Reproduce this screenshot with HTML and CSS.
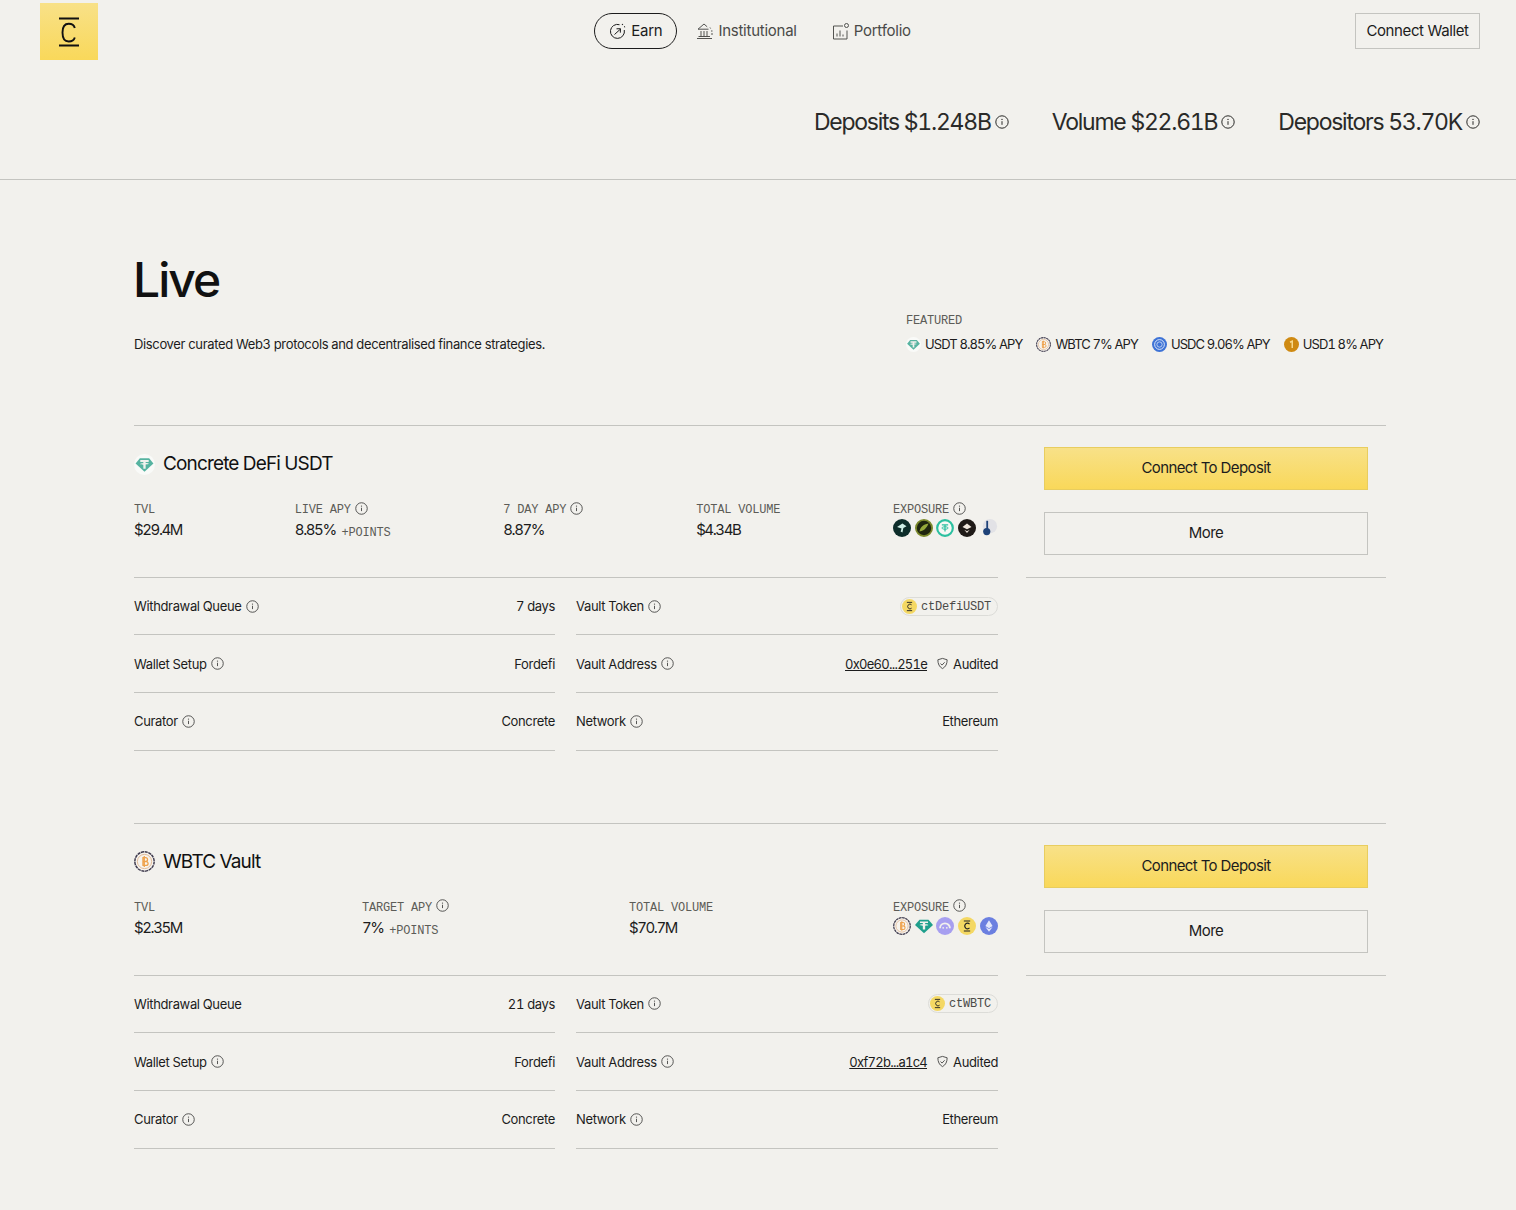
FILE: index.html
```html
<!DOCTYPE html>
<html lang="en">
<head>
    <meta charset="UTF-8">
    <meta name="viewport" content="width=device-width, initial-scale=1.0">
    <title>Concrete Earn</title>
    <link rel="stylesheet" href="styles.css">
</head>
<body>
    <svg class="sprites" aria-hidden="true">
        <symbol id="info" viewBox="0 0 14 14">
            <circle cx="7" cy="7" r="6.200" fill="none" stroke="currentColor"/>
            <path d="M7 6.200v3.600" stroke="currentColor" fill="none"/>
            <circle cx="7" cy="4.400" r=".7" fill="currentColor"/>
        </symbol>
        <symbol id="tether" viewBox="0 0 20 20">
            <circle cx="10" cy="10" r="10" fill="#f9faf8"/>
            <path d="M5.600 4h8.800L18.500 9 10 17 1.500 9z" fill="#56b3a0"/>
            <path d="M6 5.800h8v1.700h-2.900v1.100c1.700.1 3 .4 3 .7s-1.300.6-3 .7V14H8.900v-3.800c-1.700-.1-3-.4-3-.7s1.300-.6 3-.7V7.500H6z" fill="#f2f1ed"/>
        </symbol>
        <symbol id="tether-solid" viewBox="0 0 20 20">
            <path d="M5 3h10l5 6-10 9L0 9z" fill="#1f9f8c"/>
            <path d="M5.500 5h9v1.800h-3.200V8c2 .1 3.500.4 3.500.8s-1.500.7-3.500.8V14H8.700V9.600c-2-.1-3.500-.4-3.500-.8s1.500-.7 3.500-.8V6.800H5.500z" fill="#f2f1ed"/>
        </symbol>
        <symbol id="wbtc" viewBox="0 0 20 20">
            <circle cx="10" cy="10" r="9.200" fill="#f7f4ee" stroke="#3f3b4e" stroke-width="1.400" stroke-dasharray="3 .6"/>
            <circle cx="10" cy="10" r="6.800" fill="none" stroke="#dcb08a" stroke-width=".8"/>
            <path d="M8.500 6.200v7.600M8 6.200h3a1.900 1.900 0 0 1 0 3.800H8.500M8.500 10H11.500a1.900 1.900 0 0 1 0 3.800H8M9.800 4.800v10.400" fill="none" stroke="#eea24c" stroke-width="1.200"/>
        </symbol>
        <symbol id="usdc" viewBox="0 0 20 20">
            <circle cx="10" cy="10" r="10" fill="#3e73d6"/>
            <circle cx="10" cy="10" r="6.500" fill="none" stroke="#dfe8f8" stroke-width="1.300"/>
            <circle cx="10" cy="10" r="3.500" fill="none" stroke="#dfe8f8"/>
        </symbol>
        <symbol id="usd1" viewBox="0 0 20 20">
            <circle cx="10" cy="10" r="10" fill="#cf8a12"/>
            <path d="M8 7l3-1.500v9" fill="none" stroke="#f7d98c" stroke-width="2"/>
        </symbol>
        <symbol id="ctoken" viewBox="0 0 20 20">
            <circle cx="10" cy="10" r="10" fill="#f4d863"/>
            <path d="M6.500 4.500h7M6.500 15.500h7" stroke="#222" stroke-width="1.200"/>
            <path d="M12.800 7.800a3 3.200 0 1 0 0 4.400" fill="none" stroke="#222" stroke-width="1.200"/>
        </symbol>
        <symbol id="eth" viewBox="0 0 20 20">
            <circle cx="10" cy="10" r="10" fill="#6b7fe0"/>
            <path d="M10 3.500l4 6.500-4 2.400L6 10zM6 11l4 5.500 4-5.500-4 2.400z" fill="#e4e8fb"/>
        </symbol>
        <symbol id="arc" viewBox="0 0 20 20">
            <circle cx="10" cy="10" r="10" fill="#a79ff0"/>
            <path d="M4.500 12.500a5.500 5.500 0 0 1 11 0" fill="none" stroke="#f2f1ed" stroke-width="2"/>
            <circle cx="8" cy="12" r="1" fill="#f2f1ed"/>
            <circle cx="12" cy="12" r="1" fill="#f2f1ed"/>
        </symbol>
        <symbol id="exp-dark" viewBox="0 0 20 20">
            <circle cx="10" cy="10" r="10" fill="#0d2d2a"/>
            <path d="M4.500 9l6-4 4.500 3-3.500 2-1 5-2-1 1-3.500z" fill="#cfeee6"/>
        </symbol>
        <symbol id="exp-olive" viewBox="0 0 20 20">
            <circle cx="10" cy="10" r="9" fill="#20260f" stroke="#7c8a2c" stroke-width="2"/>
            <path d="M5 14c1-5 4-8 10-9-1 2-1 3-3 5-1 2-4 3-7 4z" fill="#95a93a"/>
        </symbol>
        <symbol id="exp-ring" viewBox="0 0 20 20">
            <circle cx="10" cy="10" r="8.700" fill="#f7f8f5" stroke="#2cc0a0" stroke-width="2.400"/>
            <path d="M6.500 6.500h7M10 6.500V14" fill="none" stroke="#2cc0a0" stroke-width="1.400"/>
            <ellipse cx="10" cy="10" rx="3.500" ry="1.400" fill="none" stroke="#2cc0a0"/>
        </symbol>
        <symbol id="exp-black" viewBox="0 0 20 20">
            <circle cx="10" cy="10" r="10" fill="#1f1a17"/>
            <path d="M5 9l5-4 5 4-5 2.500zM7 12l3 1.500 3-1.500-3 3.500z" fill="#efe6dc"/>
        </symbol>
        <symbol id="exp-thermo" viewBox="0 0 20 20">
            <circle cx="11" cy="8" r="8" fill="#e2e2e6"/>
            <path d="M7 2h2v9H7z" fill="#1e4278"/>
            <circle cx="7.500" cy="14" r="4" fill="#1e4278"/>
        </symbol>
    </svg>

    <header class="topbar">
        <a class="logo" href="#">
            <svg viewBox="0 0 20 30" width="20" height="30" fill="none" stroke="#111" stroke-width="1.900">
                <path d="M0 1.500h20M0 28.500h20"/>
                <path d="M15.800 11C15 8 13 6.800 9.700 6.800 5.500 6.800 3.500 10 3.500 15.500S5.500 24.500 9.700 24.500c3.300 0 5.300-1.300 6.100-4"/>
            </svg>
        </a>
        <nav class="nav">
            <a class="nav-item active" href="#">
                <svg viewBox="0 0 18 18" width="18" height="18" fill="none" stroke="currentColor">
                    <path d="M10.500 2.700A7 7 0 1 0 15.300 8"/>
                    <path d="M5.500 12.500l5.500-5M7.500 6.800l4-.1-.2 4"/>
                    <path d="M13.200 2.800l.5-.8M15.200 5l.8-.4" stroke-width="1.300"/>
                </svg>
                Earn
            </a>
            <a class="nav-item" href="#">
                <svg viewBox="0 0 18 18" width="18" height="18" fill="none" stroke="currentColor" stroke-width=".95">
                    <path d="M2 7.200L8 2l3.200 2.800M2 7.200h10.500M1 16.500h15M2.500 14.500h11.500"/>
                    <path d="M5 9v5.500M8 9v5.500M11 9v5.500"/>
                    <path d="M14 5.500l.6 1M16.500 9H15M15 12h2"/>
                </svg>
                Institutional
            </a>
            <a class="nav-item portfolio" href="#">
                <svg viewBox="0 0 18 18" width="18" height="18" fill="none" stroke="currentColor" stroke-width=".95">
                    <path d="M11 4H1.500v13H15V8.500"/>
                    <circle cx="14.500" cy="3.500" r="2"/>
                    <path d="M5 14.500v-3M8 14.500V8.500M11 14.500v-2"/>
                </svg>
                Portfolio
            </a>
        </nav>
        <div class="topbar-right">
            <button class="wallet-btn">Connect Wallet</button>
        </div>
    </header>

    <section class="stats">
        <div class="stat">Deposits $1.248B<svg class="info-lg"><use href="#info"/></svg></div>
        <div class="stat">Volume $22.61B<svg class="info-lg"><use href="#info"/></svg></div>
        <div class="stat">Depositors 53.70K<svg class="info-lg"><use href="#info"/></svg></div>
    </section>

    <main class="content">
        <div class="intro">
            <div>
                <h1>Live</h1>
                <p class="lead">Discover curated Web3 protocols and decentralised finance strategies.</p>
            </div>
            <div class="featured">
                <div class="mono-label">FEATURED</div>
                <div class="featured-list">
                    <span class="feat"><svg class="ico-feat"><use href="#tether"/></svg>USDT 8.85% APY</span>
                    <span class="feat"><svg class="ico-feat"><use href="#wbtc"/></svg>WBTC 7% APY</span>
                    <span class="feat"><svg class="ico-feat"><use href="#usdc"/></svg>USDC 9.06% APY</span>
                    <span class="feat"><svg class="ico-feat"><use href="#usd1"/></svg>USD1 8% APY</span>
                </div>
            </div>
        </div>

        <article class="vault">
            <div class="vault-top">
                <div class="summary">
                    <h2><svg class="ico-title"><use href="#tether"/></svg>Concrete DeFi USDT</h2>
                    <div class="metrics">
                        <div class="metric">
                            <div class="mono-label">TVL</div>
                            <div class="metric-val">$29.4M</div>
                        </div>
                        <div class="metric">
                            <div class="mono-label">LIVE APY<svg class="info"><use href="#info"/></svg></div>
                            <div class="metric-val">8.85% <span class="points">+POINTS</span></div>
                        </div>
                        <div class="metric">
                            <div class="mono-label">7 DAY APY<svg class="info"><use href="#info"/></svg></div>
                            <div class="metric-val">8.87%</div>
                        </div>
                        <div class="metric">
                            <div class="mono-label">TOTAL VOLUME</div>
                            <div class="metric-val">$4.34B</div>
                        </div>
                        <div class="metric">
                            <div class="mono-label">EXPOSURE<svg class="info"><use href="#info"/></svg></div>
                            <div class="exposure">
                                <svg><use href="#exp-dark"/></svg>
                                <svg><use href="#exp-olive"/></svg>
                                <svg><use href="#exp-ring"/></svg>
                                <svg><use href="#exp-black"/></svg>
                                <svg><use href="#exp-thermo"/></svg>
                            </div>
                        </div>
                    </div>
                </div>
                <div class="actions">
                    <button class="btn-primary">Connect To Deposit</button>
                    <button class="btn-more">More</button>
                </div>
            </div>
            <div class="details">
                <div class="row"><span class="row-key">Withdrawal Queue<svg class="info"><use href="#info"/></svg></span><span>7 days</span></div>
                <div class="row"><span class="row-key">Vault Token<svg class="info"><use href="#info"/></svg></span><span class="token"><svg><use href="#ctoken"/></svg>ctDefiUSDT</span></div>
                <div class="row"><span class="row-key">Wallet Setup<svg class="info"><use href="#info"/></svg></span><span>Fordefi</span></div>
                <div class="row"><span class="row-key">Vault Address<svg class="info"><use href="#info"/></svg></span><span class="address"><a href="#">0x0e60...251e</a><span class="audited"><svg viewBox="0 0 14 14" width="13" height="13" fill="none" stroke="currentColor"><path d="M7 1.500l5 1.500c0 4.500-1.500 7.500-5 9.500-3.500-2-5-5-5-9.500z"/><path d="M4.800 7l1.700 1.700 2.800-3"/></svg>Audited</span></span></div>
                <div class="row"><span class="row-key">Curator<svg class="info"><use href="#info"/></svg></span><span>Concrete</span></div>
                <div class="row"><span class="row-key">Network<svg class="info"><use href="#info"/></svg></span><span>Ethereum</span></div>
            </div>
        </article>

        <article class="vault">
            <div class="vault-top">
                <div class="summary">
                    <h2><svg class="ico-title"><use href="#wbtc"/></svg>WBTC Vault</h2>
                    <div class="metrics">
                        <div class="metric">
                            <div class="mono-label">TVL</div>
                            <div class="metric-val">$2.35M</div>
                        </div>
                        <div class="metric">
                            <div class="mono-label">TARGET APY<svg class="info"><use href="#info"/></svg></div>
                            <div class="metric-val">7% <span class="points">+POINTS</span></div>
                        </div>
                        <div class="metric">
                            <div class="mono-label">TOTAL VOLUME</div>
                            <div class="metric-val">$70.7M</div>
                        </div>
                        <div class="metric">
                            <div class="mono-label">EXPOSURE<svg class="info"><use href="#info"/></svg></div>
                            <div class="exposure">
                                <svg><use href="#wbtc"/></svg>
                                <svg><use href="#tether-solid"/></svg>
                                <svg><use href="#arc"/></svg>
                                <svg><use href="#ctoken"/></svg>
                                <svg><use href="#eth"/></svg>
                            </div>
                        </div>
                    </div>
                </div>
                <div class="actions">
                    <button class="btn-primary">Connect To Deposit</button>
                    <button class="btn-more">More</button>
                </div>
            </div>
            <div class="details">
                <div class="row"><span class="row-key">Withdrawal Queue</span><span>21 days</span></div>
                <div class="row"><span class="row-key">Vault Token<svg class="info"><use href="#info"/></svg></span><span class="token"><svg><use href="#ctoken"/></svg>ctWBTC</span></div>
                <div class="row"><span class="row-key">Wallet Setup<svg class="info"><use href="#info"/></svg></span><span>Fordefi</span></div>
                <div class="row"><span class="row-key">Vault Address<svg class="info"><use href="#info"/></svg></span><span class="address"><a href="#">0xf72b...a1c4</a><span class="audited"><svg viewBox="0 0 14 14" width="13" height="13" fill="none" stroke="currentColor"><path d="M7 1.500l5 1.500c0 4.500-1.500 7.500-5 9.500-3.500-2-5-5-5-9.500z"/><path d="M4.800 7l1.700 1.700 2.800-3"/></svg>Audited</span></span></div>
                <div class="row"><span class="row-key">Curator<svg class="info"><use href="#info"/></svg></span><span>Concrete</span></div>
                <div class="row"><span class="row-key">Network<svg class="info"><use href="#info"/></svg></span><span>Ethereum</span></div>
            </div>
        </article>
    </main>
</body>
</html>
```

FILE: styles.css
```css
*{
    box-sizing: border-box;
}
body{
    margin: 0;
    background: #f2f1ed;
    color: #1c1c1c;
    font-family: "Inter", "Liberation Sans", sans-serif;
    font-size: 13px;
    font-variant-numeric: tabular-nums;
    letter-spacing: -0.35px;
}
a{
    color: inherit;
    text-decoration: none;
}
button{
    font-family: inherit;
    letter-spacing: inherit;
    color: inherit;
    cursor: pointer;
}
.sprites{
    width: 0;
    height: 0;
    position: absolute;
}

/* top bar */
.topbar{
    display: grid;
    grid-template-columns: 1fr auto 1fr;
    padding: 3px 36px 0 40px;
    height: 62px;
}
.logo{
    width: 58px;
    height: 57px;
    display: flex;
    align-items: center;
    justify-content: center;
    background: linear-gradient(#f8e188, #f9d85a);
}
.nav{
    display: flex;
    align-items: flex-start;
    gap: 19px;
    padding: 10px 15px 0 0;
}
.nav-item{
    display: flex;
    align-items: center;
    gap: 4px;
    height: 36px;
    padding-bottom: 1px;
    font-size: 15px;
    letter-spacing: -0.25px;
    color: #4a4a48;
}
.nav-item.active{
    color: #1c1c1c;
    border: 1px solid #1c1c1c;
    border-radius: 18px;
    padding: 0 14px 1px;
}
.portfolio{
    margin-left: 16px;
}
.topbar-right{
    display: flex;
    justify-content: flex-end;
    padding-top: 10px;
}
.wallet-btn{
    width: 125px;
    height: 36px;
    padding: 0 0 2px;
    font-size: 15px;
    letter-spacing: -0.375px;
    background: none;
    border: 1px solid #c4c4c0;
}

/* stats */
.stats{
    display: flex;
    justify-content: flex-end;
    gap: 43px;
    height: 118px;
    padding: 43px 36px 0 0;
    border-bottom: 1px solid #c4c4c0;
}
.stat{
    display: flex;
    align-items: center;
    gap: 4px;
    height: 33px;
    font-size: 23px;
    letter-spacing: -1.25px;
    color: #2a2a28;
}
.info-lg{
    width: 14px;
    height: 14px;
}

/* intro */
.content{
    width: 1252px;
    margin-left: 134px;
}
.intro{
    display: flex;
    justify-content: space-between;
    align-items: flex-end;
    height: 245px;
    padding: 0 3px 72px 0;
}
h1{
    font-size: 48px;
    font-weight: 500;
    letter-spacing: -2px;
    line-height: 58px;
    margin: 0 0 26px -1px;
    color: #111;
}
.lead{
    margin: 0;
    line-height: 18px;
}
.mono-label{
    display: flex;
    align-items: center;
    gap: 4px;
    height: 16px;
    padding-top: 2px;
    font-family: "Liberation Mono", monospace;
    font-size: 12px;
    letter-spacing: -0.2px;
    color: #5c5c57;
    white-space: pre;
}
.mono-label .info{
    margin-top: -4px;
}
.featured-list{
    display: flex;
    gap: 14px;
    margin-top: 7px;
    line-height: 18px;
    letter-spacing: -0.9px;
}
.feat{
    display: flex;
    align-items: center;
    gap: 4px;
}
.ico-feat{
    width: 15px;
    height: 15px;
}

/* vault */
.vault{
    border-top: 1px solid #c4c4c0;
    margin-bottom: 72.3px;
}
.vault-top{
    display: flex;
    gap: 28px;
}
.summary{
    width: 864px;
    height: 151.7px;
    border-bottom: 1px solid #c4c4c0;
}
h2{
    display: flex;
    align-items: center;
    gap: 8px;
    margin: 0;
    padding-top: 25px;
    font-size: 19px;
    font-weight: 400;
    letter-spacing: -0.85px;
    line-height: 26px;
    color: #111;
}
.ico-title{
    width: 21px;
    height: 21px;
}
.metrics{
    display: flex;
    justify-content: space-between;
    margin-top: 24px;
}
.metric-val{
    margin-top: 3px;
    font-size: 15px;
    letter-spacing: -1.4px;
    line-height: 20px;
    white-space: pre;
}
.points{
    display: inline-block;
    margin-left: 3px;
    vertical-align: -1px;
    font-family: "Liberation Mono", monospace;
    font-size: 12px;
    letter-spacing: -0.2px;
    color: #5c5c57;
}
.info{
    width: 13px;
    height: 13px;
    flex: none;
    color: #4a4a48;
}
.exposure{
    display: flex;
    justify-content: space-between;
    width: 105px;
    margin-top: 2px;
}
.exposure svg{
    width: 18px;
    height: 18px;
}
.actions{
    width: 360px;
    height: 151.7px;
    display: flex;
    flex-direction: column;
    gap: 22px;
    padding: 21px 18px 0;
    border-bottom: 1px solid #c4c4c0;
}
.btn-primary,
.btn-more{
    height: 43px;
    padding: 0 0 2px;
    font-size: 15px;
    letter-spacing: -0.6px;
}
.btn-primary{
    background: linear-gradient(#f8e188, #f9d85a);
    border: 1px solid #e8cd5f;
}
.btn-more{
    background: none;
    border: 1px solid #c4c4c0;
}

/* detail rows */
.details{
    width: 864px;
    display: grid;
    grid-template-columns: 421px 422px;
    column-gap: 21px;
}
.row{
    display: flex;
    justify-content: space-between;
    align-items: center;
    height: 57.67px;
    border-bottom: 1px solid #c4c4c0;
}
.row-key{
    display: flex;
    align-items: center;
    gap: 4px;
}
.token{
    display: flex;
    align-items: center;
    gap: 4px;
    height: 19px;
    padding: 1px 6px 0 1px;
    border: 1px solid #dcdcd8;
    border-radius: 10px;
    font-family: "Liberation Mono", monospace;
    font-size: 12px;
    letter-spacing: -0.2px;
    color: #4a4a48;
}
.token svg{
    width: 15px;
    height: 15px;
    margin-top: -1px;
}
.address{
    display: flex;
    align-items: center;
    gap: 9px;
}
.address a{
    letter-spacing: -0.75px;
    text-decoration: underline;
}
.audited{
    display: flex;
    align-items: center;
    gap: 4px;
}
.audited svg{
    color: #4a4a48;
}
```
